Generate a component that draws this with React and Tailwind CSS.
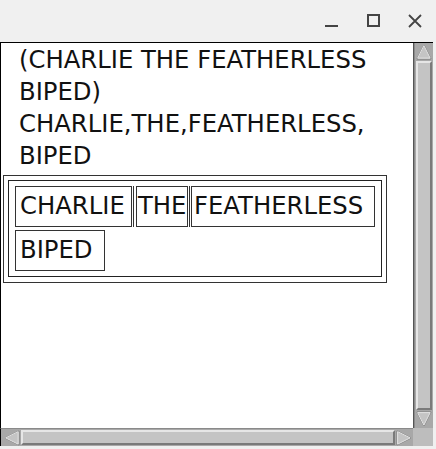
import React from 'react'

function Arrow({ dir }) {
    // bevelled triangle, like the old X11 scrollbar arrows
    const pts = {
        up: '9,2 16,16 2,16',
        down: '2,2 16,2 9,16',
        left: '2,9 16,2 16,16',
        right: '2,2 16,9 2,16',
    }[dir]
    return (
        <svg width="18" height="18" viewBox="0 0 18 18" className="block">
            <polygon points={pts} fill="#c4c4c4" stroke="#7a7a7a" strokeWidth="1" />
            <polygon points={pts} fill="none" stroke="#ececec" strokeWidth="1" transform="translate(0.8 0.8) scale(0.9)" />
        </svg>
    )
}

function Cell({ children, w }) {
    return (
        <div className={`border border-[#333] pl-[4px] h-[41px] flex items-center text-[24.3px] text-[#111] whitespace-nowrap ${w}`}>
            {children}
        </div>
    )
}

export default function App() {
    return (
        <div className="w-[436px] h-[449px] bg-[#f0f0f0] flex flex-col overflow-hidden" style={{ fontFamily: '"DejaVu Sans", Verdana, sans-serif' }}>
            {/* title bar */}
            <div className="h-[42px] flex items-start justify-end shrink-0 text-[#333]">
                <div className="w-[13px] h-[2px] bg-[#444] mt-[25px]" />
                <div className="w-[13px] h-[13px] border-2 border-[#444] ml-[29px] mt-[14px]" />
                <svg width="14" height="14" viewBox="0 0 14 14" className="ml-[28px] mt-[14px] mr-[14px]">
                    <path d="M1 1 L13 13 M13 1 L1 13" stroke="#444" strokeWidth="1.8" />
                </svg>
            </div>

            {/* window body */}
            <div className="flex flex-col w-[433px] h-[404px] border-t border-black">
                <div className="flex flex-1 min-h-0">
                    <div className="flex-1 bg-white border-l border-black border-r border-r-[#555] pl-[18px] pt-[1px] overflow-hidden">
                        <div className="text-[24.3px] leading-[32px] text-[#111] whitespace-nowrap">
                            (CHARLIE THE FEATHERLESS<br />BIPED)<br />
                            CHARLIE,THE,FEATHERLESS,<br />BIPED
                        </div>
                        <div className="-ml-[16px] mt-[3px] w-[384px] border border-[#333] p-[4px] pb-[5px]">
                            <div className="border border-[#222] px-[6px] pt-[5px] pb-[5px]">
                                <div className="flex flex-wrap gap-y-[3px]">
                                    <Cell w="w-[117px]">CHARLIE</Cell>
                                    <div className="ml-[1px] border-l border-[#333] pl-[2px]">
                                        <Cell w="w-[52px] !pl-[1px]">THE</Cell>
                                    </div>
                                    <div className="ml-[1px] border-l border-[#333] pl-[1px]">
                                        <Cell w="w-[184px] !pl-[2px]">FEATHERLESS</Cell>
                                    </div>
                                    <Cell w="w-[90px]">BIPED</Cell>
                                </div>
                            </div>
                        </div>
                    </div>

                    {/* vertical scrollbar */}
                    <div className="w-[19px] bg-[#a8a8a8] flex flex-col border-l border-[#8a8a8a]">
                        <Arrow dir="up" />
                        <div className="flex-1 mx-[1px] bg-[#c4c4c4] border-l-2 border-t-2 border-l-[#e6e6e6] border-t-[#e6e6e6] border-r-2 border-b-2 border-r-[#7a7a7a] border-b-[#7a7a7a]" />
                        <Arrow dir="down" />
                    </div>
                </div>

                {/* horizontal scrollbar */}
                <div className="flex h-[18px] shrink-0">
                    <div className="flex-1 bg-[#a8a8a8] flex border-l border-black border-t border-t-[#8a8a8a] pl-[2px]">
                        <Arrow dir="left" />
                        <div className="flex-1 my-[1px] bg-[#c4c4c4] border-l-2 border-t-2 border-l-[#e6e6e6] border-t-[#e6e6e6] border-r-2 border-b-2 border-r-[#7a7a7a] border-b-[#7a7a7a]" />
                        <Arrow dir="right" />
                    </div>
                    <div className="w-[20px] bg-[#bdbdbd]" />
                </div>
            </div>
        </div>
    )
}
